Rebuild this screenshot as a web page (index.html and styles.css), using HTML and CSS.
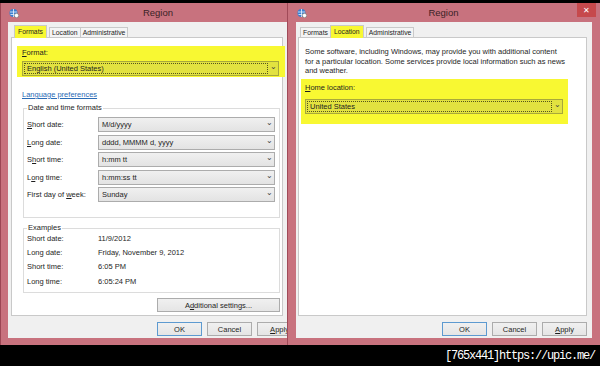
FILE: index.html
```html
<!DOCTYPE html>
<html lang="en">
<head>
    <meta charset="UTF-8">
    <title>Region</title>
    <link rel="stylesheet" href="styles.css">
</head>
<body>
    <div class="screen">
        <div class="window win-left">
            <div class="titlebar">
                <svg class="app-icon" width="10" height="10" viewBox="0 0 10 10">
                    <circle cx="4.5" cy="5" r="4" fill="#3a7fd0"/>
                    <path d="M1 4h7M1.5 6.5h6M4.5 1v8" stroke="#e8f2ff" stroke-width="0.8" fill="none"/>
                    <circle cx="7.5" cy="7.5" r="2.2" fill="#fff" stroke="#555" stroke-width="0.5"/>
                </svg>
                <span class="title">Region</span>
            </div>
            <div class="client">
                <div class="tabs">
                    <span class="tab active mark">Formats</span>
                    <span class="tab">Location</span>
                    <span class="tab">Administrative</span>
                </div>
                <div class="panel">
                    <div class="mark-box format-box">
                        <div class="label"><u>F</u>ormat:</div>
                        <div class="combo focus"><span class="combo-text">English (United States)</span><span class="arrow">&#8964;</span></div>
                    </div>
                    <a class="link" href="#">Language preferences</a>
                    <fieldset class="group formats">
                        <legend>Date and time formats</legend>
                        <div class="row"><span class="key"><u>S</u>hort date:</span><div class="combo"><span class="combo-text">M/d/yyyy</span><span class="arrow">&#8964;</span></div></div>
                        <div class="row"><span class="key"><u>L</u>ong date:</span><div class="combo"><span class="combo-text">dddd, MMMM d, yyyy</span><span class="arrow">&#8964;</span></div></div>
                        <div class="row"><span class="key">S<u>h</u>ort time:</span><div class="combo"><span class="combo-text">h:mm tt</span><span class="arrow">&#8964;</span></div></div>
                        <div class="row"><span class="key">L<u>o</u>ng time:</span><div class="combo"><span class="combo-text">h:mm:ss tt</span><span class="arrow">&#8964;</span></div></div>
                        <div class="row"><span class="key">First day of <u>w</u>eek:</span><div class="combo"><span class="combo-text">Sunday</span><span class="arrow">&#8964;</span></div></div>
                    </fieldset>
                    <fieldset class="group examples">
                        <legend>Examples</legend>
                        <div class="ex-row"><span class="key">Short date:</span><span>11/9/2012</span></div>
                        <div class="ex-row"><span class="key">Long date:</span><span>Friday, November 9, 2012</span></div>
                        <div class="ex-row"><span class="key">Short time:</span><span>6:05 PM</span></div>
                        <div class="ex-row"><span class="key">Long time:</span><span>6:05:24 PM</span></div>
                    </fieldset>
                    <div class="extra">
                        <button class="btn wide">A<u>d</u>ditional settings...</button>
                    </div>
                </div>
                <div class="footer">
                    <button class="btn default">OK</button>
                    <button class="btn">Cancel</button>
                    <button class="btn"><u>A</u>pply</button>
                </div>
            </div>
        </div>

        <div class="window win-right">
            <div class="titlebar">
                <svg class="app-icon" width="10" height="10" viewBox="0 0 10 10">
                    <circle cx="4.5" cy="5" r="4" fill="#3a7fd0"/>
                    <path d="M1 4h7M1.5 6.5h6M4.5 1v8" stroke="#e8f2ff" stroke-width="0.8" fill="none"/>
                    <circle cx="7.5" cy="7.5" r="2.2" fill="#fff" stroke="#555" stroke-width="0.5"/>
                </svg>
                <span class="title">Region</span>
                <span class="close">&#10005;</span>
            </div>
            <div class="client">
                <div class="tabs">
                    <span class="tab">Formats</span>
                    <span class="tab active mark">Location</span>
                    <span class="tab">Administrative</span>
                </div>
                <div class="panel">
                    <p class="intro">Some software, including Windows, may provide you with additional content for a particular location. Some services provide local information such as news and weather.</p>
                    <div class="mark-box home-box">
                        <div class="label"><u>H</u>ome location:</div>
                        <div class="combo focus"><span class="combo-text">United States</span><span class="arrow">&#8964;</span></div>
                    </div>
                </div>
                <div class="footer right">
                    <button class="btn default">OK</button>
                    <button class="btn">Cancel</button>
                    <button class="btn"><u>A</u>pply</button>
                </div>
            </div>
        </div>
    </div>
    <div class="caption">[765x441]https://upic.me/</div>
</body>
</html>
```

FILE: styles.css
```css
body {
    margin: 0;
    width: 600px;
    height: 366px;
    overflow: hidden;
    background: #000;
    font-family: "Liberation Sans", Arial, sans-serif;
    font-size: 7.5px;
    color: #1e1e1e;
}
.screen {
    display: flex;
    margin-top: 3px;
    height: 342px;
}
.window {
    display: flex;
    flex-direction: column;
    background: #c8727e;
    box-sizing: border-box;
}
.win-left {
    width: 287px;
    padding-left: 7px;
    border-left: 1px solid #9c4654;
}
.win-right {
    width: 313px;
    padding: 0 8px 0 8px;
    border-left: 1px solid #a04a58;
}
.titlebar {
    height: 19px;
    display: flex;
    align-items: center;
    position: relative;
}
.app-icon {
    margin-left: 1px;
}
.title {
    flex: 1;
    text-align: center;
    font-size: 9.5px;
    color: #3a2226;
}
.win-left .title {
    padding-left: 10px;
}
.win-right .title {
    padding-left: 3px;
}
.close {
    width: 19px;
    height: 14px;
    margin-top: -5px;
    margin-right: -4px;
    background: #c6494c;
    color: #fff;
    font-size: 8px;
    display: flex;
    align-items: center;
    justify-content: center;
}
.client {
    height: 316px;
    background: #f0f0f0;
    display: flex;
    flex-direction: column;
    overflow: hidden;
}
.tabs {
    display: flex;
    align-items: flex-end;
    height: 16px;
    padding-left: 6px;
}
.win-right .tabs {
    padding-left: 4px;
}
.tab {
    height: 10px;
    line-height: 10px;
    padding: 0 2px;
    font-size: 6.8px;
    border: 1px solid #c9c9c9;
    border-bottom: none;
    background: #f4f4f4;
    margin-right: -1px;
}
.tab.active {
    height: 12px;
    line-height: 12px;
    padding: 0 3px;
    margin: 0 1px 0 0;
    background: #fff;
    position: relative;
    z-index: 1;
}
.tab.active + .tab {
    margin-left: 1px;
}
.mark {
    background: #f8f832 !important;
}
.panel {
    flex-shrink: 0;
    height: 279px;
    margin: 0 4px 0 3px;
    box-sizing: border-box;
    background: #fff;
    border: 1px solid #c9c9c9;
    margin-top: -1px;
    display: flex;
    flex-direction: column;
}
.win-right .panel {
    margin: -1px 5px 0 2px;
}
.mark-box {
    background: #f8f832;
    box-sizing: border-box;
}
.format-box {
    margin: 8px -3px 0 5px;
    height: 31px;
    padding: 2px 4px 0 5px;
}
.label {
    height: 10px;
    line-height: 10px;
}
.combo {
    height: 15px;
    box-sizing: border-box;
    border: 1px solid #acacac;
    background: linear-gradient(#f0f0f0, #e3e3e3);
    display: flex;
    align-items: center;
    padding-left: 3px;
}
.format-box .combo {
    margin-top: 3px;
    margin-right: 2px;
}
.combo.focus {
    background: #e2e240;
    border-color: #a8a83a;
    padding: 1px 0 1px 1px;
}
.combo.focus .combo-text {
    flex: 1;
    height: 100%;
    box-sizing: border-box;
    border: 1px dotted #55551a;
    padding-left: 2px;
    line-height: 10px;
}
.combo-text {
    flex: 1;
}
.arrow {
    width: 10px;
    text-align: center;
    font-size: 8px;
    line-height: 6px;
    height: 9px;
    color: #444;
}
.link {
    margin: 13px 0 0 10px;
    color: #2a6bb5;
    text-decoration: underline;
    line-height: 10px;
}
.group {
    margin: 0 2px 0 11px;
    padding: 0 4px 0 3px;
    border: 1px solid #dcdcdc;
    box-sizing: border-box;
}
.group legend {
    padding: 0 1px;
    margin-left: 0;
    line-height: 10px;
}
.formats {
    margin-top: 3px;
    height: 115px;
    padding-top: 3px;
}
.row {
    display: flex;
    align-items: center;
    height: 17.5px;
}
.row .key {
    width: 71px;
}
.row .combo {
    flex: 1;
    margin-right: 0;
}
.examples {
    margin-top: 5px;
    height: 70px;
    padding-top: 0;
}
.examples legend {
    margin-bottom: -2px;
}
.ex-row {
    display: flex;
    align-items: center;
    height: 14.3px;
}
.ex-row .key {
    width: 71px;
}
.extra {
    display: flex;
    justify-content: flex-end;
    margin: 5px 2px 0 0;
}
.btn {
    flex-shrink: 0;
    font-family: inherit;
    font-size: 7.5px;
    color: #1e1e1e;
    height: 14px;
    padding: 0;
    border: 1px solid #acacac;
    background: linear-gradient(#f0f0f0, #e5e5e5);
    width: 45px;
}
.btn.wide {
    width: 123px;
}
.btn.default {
    border-color: #5d9ad0;
}
.footer {
    display: flex;
    gap: 5px;
    margin: 6px 0 0 149px;
}
.footer.right {
    margin-left: 146px;
}
.intro {
    margin: 9px 20px 0 6px;
    line-height: 9.6px;
}
.home-box {
    margin: 3px 18px 0 2px;
    height: 45px;
    padding: 4px 5px 0 4px;
}
.home-box .label {
    height: 12px;
}
.home-box .combo {
    margin-top: 4px;
}
.caption {
    text-align: right;
    padding-right: 5px;
    margin-top: 3px;
    color: #fff;
    font-family: "Liberation Mono", monospace;
    font-size: 12px;
    letter-spacing: -1.2px;
    line-height: 16px;
}
```
